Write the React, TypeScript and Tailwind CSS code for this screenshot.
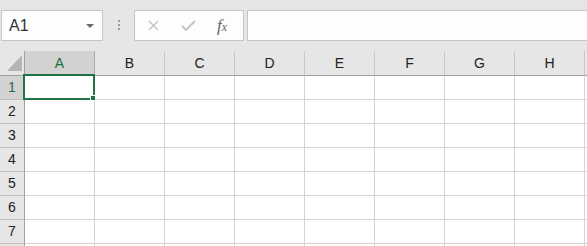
const COLS = ["A", "B", "C", "D", "E", "F", "G", "H", ""];
const ROWS = [1, 2, 3, 4, 5, 6, 7, 8];

function Toolbar() {
  return (
    <div className="flex h-[51px] items-start gap-0 bg-[#e6e6e6] pt-[10px]">
      {/* name box */}
      <div className="ml-[1px] flex h-[31px] w-[102px] items-center justify-between border border-[#c6c6c6] bg-[#fdfdfd] pl-[7px] pr-[8px]">
        <span className="text-[16px] leading-none text-[#333]">A1</span>
        <svg width="8" height="4" viewBox="0 0 8 4">
          <path d="M0 0H8L4 4Z" fill="#6b6b6b" />
        </svg>
      </div>
      <div className="flex w-[31px] flex-col items-center gap-[2px] pt-[10px]">
        <span className="h-[2px] w-[2px] bg-[#9a9a9a]" />
        <span className="h-[2px] w-[2px] bg-[#9a9a9a]" />
        <span className="h-[2px] w-[2px] bg-[#9a9a9a]" />
      </div>
      {/* formula buttons */}
      <div className="flex h-[31px] w-[110px] items-center border border-[#c6c6c6] bg-[#fdfdfd]">
        <svg className="ml-[13px]" width="11" height="11" viewBox="0 0 11 11">
          <path d="M1 1L10 10M10 1L1 10" stroke="#c2c2c2" strokeWidth="1.4" />
        </svg>
        <svg className="ml-[22px]" width="15" height="11" viewBox="0 0 15 11">
          <path d="M1 6L5 10L14 1" stroke="#c2c2c2" strokeWidth="1.8" fill="none" />
        </svg>
        <span className="ml-[21px] font-['Liberation_Serif',serif] text-[17px] italic leading-none text-[#666]">
          f<span className="text-[12px]">x</span>
        </span>
      </div>
      <div className="ml-[3px] h-[31px] flex-1 border border-r-0 border-[#c6c6c6] bg-[#fdfdfd]" />
    </div>
  );
}

function Corner() {
  return (
    <div className="relative h-[25px] border-r border-b border-[#a0a0a0] bg-[#e6e6e6]">
      <svg className="absolute left-[7px] top-[4px]" width="15" height="16" viewBox="0 0 15 16">
        <path d="M15 0V16H0Z" fill="#b5b5b5" />
      </svg>
    </div>
  );
}

export default function App() {
  return (
    <div className="h-[246px] w-[587px] overflow-hidden bg-white font-['Liberation_Sans',sans-serif]">
      <Toolbar />
      <div className="grid grid-cols-[25px_repeat(8,70px)_70px]">
        <Corner />
        {COLS.map((c, i) => (
          <div
            key={"h" + i}
            className={
              "flex h-[25px] items-center justify-center border-b border-[#9e9e9e] text-[14px] " +
              (i === 0
                ? "border-r border-r-[#ababab] bg-[#d2d2d2] text-[#1e6b40]"
                : "border-r border-r-[#c8c8c8] bg-[#e6e6e6] text-[#222]")
            }
          >
            {c}
          </div>
        ))}
        {ROWS.map((r) => (
          <Row key={r} r={r} />
        ))}
      </div>
    </div>
  );
}

function Row({ r }: { r: number }) {
  return (
    <>
      <div
        className={
          "flex h-[24px] items-center justify-center border-r border-b border-r-[#a0a0a0] border-b-[#c0c0c0] text-[14px] " +
          (r === 1 ? "bg-[#d2d2d2] text-[#1e6b40]" : "bg-[#e6e6e6] text-[#222]")
        }
      >
        {r < 8 ? r : ""}
      </div>
      {COLS.map((_, i) => (
        <div key={i} className="relative h-[24px] border-r border-b border-[#d4d4d4] bg-white">
          {r === 1 && i === 0 && (
            <>
              <div className="absolute -top-[2px] -left-[2px] -right-[1px] -bottom-[1px] border-2 border-[#217346]" />
              <div className="absolute left-[65px] top-[19px] h-[7px] w-[7px] border border-white bg-[#217346]" />
            </>
          )}
        </div>
      ))}
    </>
  );
}
